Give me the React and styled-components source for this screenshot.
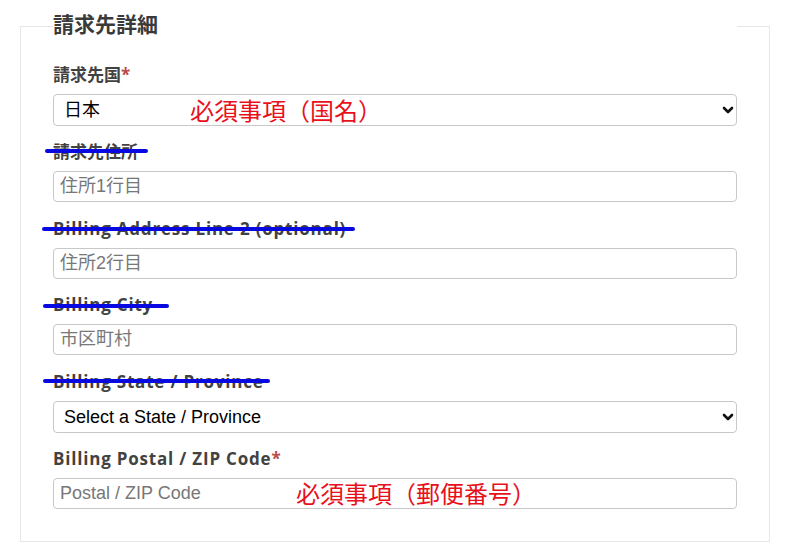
import React from "react";
import styled, { createGlobalStyle } from "styled-components";

const Global = createGlobalStyle`
  html, body { margin: 0; padding: 0; background: #fff; }
  body { font-family: "Open Sans", "Noto Sans CJK JP", sans-serif; }
  * { box-sizing: border-box; }
`;

const Page = styled.div`
  padding: 11px 16px 12px 20px;
`;

const Fieldset = styled.fieldset`
  width: 750px;
  margin: 0;
  border: 1px solid #e6e6e6;
  padding: 23px 32px 32px;
`;

const Legend = styled.legend`
  width: 100%;
  padding: 0 0 5px;
  font-family: "Open Sans", "Noto Sans CJK JP", sans-serif;
  font-weight: 700;
  font-size: 21px;
  line-height: 26px;
  color: #3a3a3a;
`;

const Field = styled.div`
  margin-bottom: ${(p) => (p.$last ? 0 : "16.4px")};
`;

const Label = styled.label`
  position: relative;
  display: block;
  width: fit-content;
  font-family: "Open Sans", "Noto Sans CJK JP", sans-serif;
  font-weight: 700;
  font-size: 17px;
  letter-spacing: ${(p) => (p.$latin ? "0.8px" : "0")};
  line-height: 20px;
  color: #424242;
  margin-bottom: 9px;
`;

const Req = styled.span`
  color: #b94a48;
`;

const Strike = styled.span`
  position: absolute;
  height: 4px;
  border-radius: 2px;
  background: #0808e0;
  left: ${(p) => p.$left}px;
  width: ${(p) => p.$width}px;
  top: ${(p) => p.$top}px;
`;

const Control = styled.div`
  position: relative;
`;

const Input = styled.input`
  display: block;
  width: 100%;
  height: 31px;
  border: 1px solid #c8c8c8;
  border-radius: 4px;
  padding: 0 6px;
  font-family: "Liberation Sans", "Noto Sans CJK JP", sans-serif;
  font-size: 18px;
  color: #222;
  background: #fff;
  &::placeholder { color: #777; }
`;

const Select = styled.select`
  display: block;
  width: 100%;
  height: 32px;
  border: 1px solid #c8c8c8;
  border-radius: 4px;
  padding: 0 28px 0 10px;
  font-family: "Liberation Sans", "Noto Sans CJK JP", sans-serif;
  font-size: 18px;
  color: #000;
  background: #fff;
  appearance: none;
  -webkit-appearance: none;
`;

const Chevron = styled.svg`
  position: absolute;
  right: 3px;
  top: 50%;
  transform: translateY(-50%);
  pointer-events: none;
`;

const Note = styled.span`
  position: absolute;
  left: ${(p) => p.$left}px;
  top: 50%;
  transform: translateY(-50%);
  font-family: "Noto Sans CJK JP", sans-serif;
  font-size: 24px;
  line-height: 1;
  color: #e8101a;
  pointer-events: none;
  white-space: nowrap;
  text-spacing-trim: space-all;
`;

const Arrow = () => (
  <Chevron width="12" height="8" viewBox="0 0 12 8">
    <path d="M2 2 L6 6 L10 2" fill="none" stroke="#111" strokeWidth="2.6" strokeLinecap="round" strokeLinejoin="round" />
  </Chevron>
);

export default function App() {
  return (
    <Page>
      <Global />
      <Fieldset>
        <Legend>請求先詳細</Legend>

        <Field>
          <Label>請求先国<Req>*</Req></Label>
          <Control>
            <Select defaultValue="jp">
              <option value="jp">日本</option>
            </Select>
            <Arrow />
            <Note $left={137}>必須事項（国名）</Note>
          </Control>
        </Field>

        <Field>
          <Label>
            請求先住所
            <Strike $left={-8} $width={103} $top={7} />
          </Label>
          <Control>
            <Input placeholder="住所1行目" />
          </Control>
        </Field>

        <Field>
          <Label $latin>
            Billing Address Line 2 (optional)
            <Strike $left={-11} $width={313} $top={8} />
          </Label>
          <Control>
            <Input placeholder="住所2行目" />
          </Control>
        </Field>

        <Field>
          <Label $latin>
            Billing City
            <Strike $left={-10} $width={126} $top={9} />
          </Label>
          <Control>
            <Input placeholder="市区町村" />
          </Control>
        </Field>

        <Field>
          <Label $latin>
            Billing State / Province
            <Strike $left={-10} $width={227} $top={7} />
          </Label>
          <Control>
            <Select defaultValue="">
              <option value="">Select a State / Province</option>
            </Select>
            <Arrow />
          </Control>
        </Field>

        <Field $last>
          <Label $latin>Billing Postal / ZIP Code<Req>*</Req></Label>
          <Control>
            <Input placeholder="Postal / ZIP Code" />
            <Note $left={243}>必須事項（郵便番号）</Note>
          </Control>
        </Field>
      </Fieldset>
    </Page>
  );
}
